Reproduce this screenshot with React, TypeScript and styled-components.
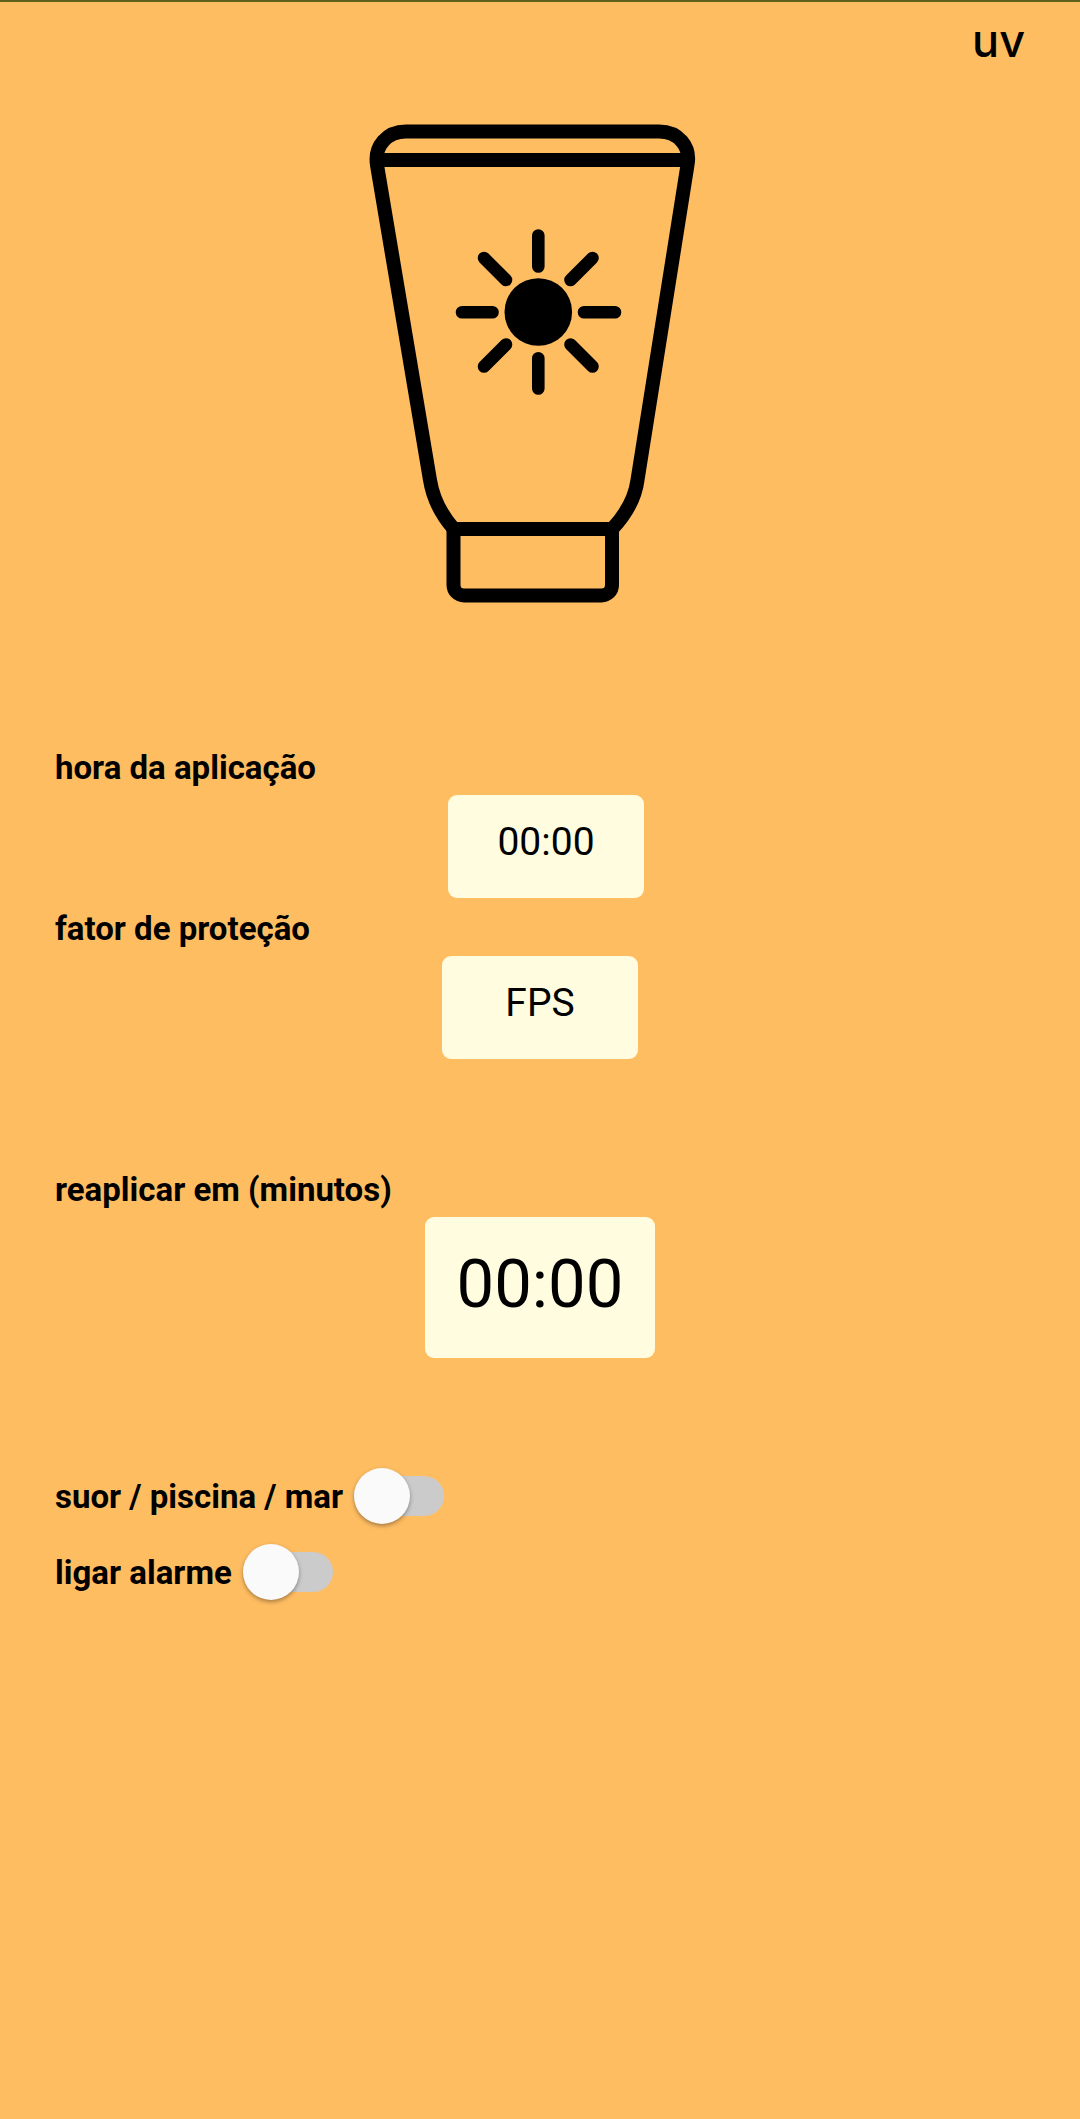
import React, { useState } from "react";
import styled, { createGlobalStyle } from "styled-components";

const GlobalStyle = createGlobalStyle`
  *, *::before { box-sizing: border-box; }
  body {
    margin: 0;
    background: #ffbd62;
    color: #000;
    font-family: Roboto, "Liberation Sans", sans-serif;
  }
`;

const Page = styled.div`
  min-height: 100vh;
  border-top: 2px solid #5f601b;
  padding: 10px 55px 110px;
  display: flex;
  flex-direction: column;
`;

const Header = styled.header`
  display: flex;
  justify-content: flex-end;
`;

const Title = styled.h1`
  margin: 0;
  font-family: Inter, Roboto, sans-serif;
  font-size: 45px;
  line-height: 58px;
  font-weight: 500;
`;

const Hero = styled.div`
  display: flex;
  justify-content: center;
  padding: 54px 0 143px;
`;

const Form = styled.form`
  display: flex;
  flex-direction: column;
  gap: 110px;
`;

const Group = styled.div<{ $gap: number }>`
  display: flex;
  flex-direction: column;
  gap: ${(p) => p.$gap}px;
`;

const Field = styled.div`
  display: flex;
  flex-direction: column;
  gap: 7px;
`;

const Label = styled.label`
  padding-top: 1px;
  font-size: 33px;
  line-height: 40px;
  font-weight: 700;
`;

const Control = styled.div<{ $indent?: number }>`
  display: flex;
  justify-content: center;
  padding-left: ${(p) => p.$indent ?? 0}px;
`;

const TextBox = styled.input`
  width: 196px;
  height: 103px;
  border: 0;
  border-radius: 9px;
  padding: 0 8px 10px;
  background: #fffcdf;
  color: #000;
  font: 400 39px Roboto, "Liberation Sans", sans-serif;
  text-align: center;

  &::placeholder {
    color: #000;
    opacity: 1;
  }
`;

const Result = styled.output`
  width: 230px;
  height: 141px;
  border-radius: 9px;
  padding-bottom: 8px;
  display: flex;
  align-items: center;
  justify-content: center;
  background: #fffcdf;
  font-size: 67px;
  line-height: 80px;
`;

const SwitchRow = styled.div`
  display: flex;
  align-items: center;
  gap: 11px;
  height: 56px;
`;

const Switch = styled.input`
  appearance: none;
  display: flex;
  align-items: center;
  width: 90px;
  height: 40px;
  margin: 0;
  border-radius: 20px;
  background: #cbcbcb;
  cursor: pointer;

  &::before {
    content: "";
    flex: none;
    width: 56px;
    height: 56px;
    border-radius: 50%;
    background: #fafafa;
    box-shadow: 0 2px 4px rgba(0, 0, 0, 0.35);
  }

  &:checked {
    justify-content: flex-end;
    background: #8fc7bf;
  }
`;

function SunscreenTube() {
  return (
    <svg
      width="344"
      height="480"
      viewBox="368 124 344 480"
      fill="none"
      stroke="#000"
      strokeWidth="14"
      role="img"
      aria-label="protetor solar"
    >
      <path d="M453 528C441 514 433 499 430 480L377 165C374 146 387 131.500 406 131.500H659C678 131.500 691 146 687.500 165L637.500 480C635 499 626 514 613 528" />
      <path d="M377 160H687" />
      <path d="M453.500 529H612V585A10.500 10.500 0 0 1 601.500 595.500H464A10.500 10.500 0 0 1 453.500 585Z" />
      <circle cx="538.300" cy="312" r="33.800" fill="#000" stroke="none" />
      <g strokeWidth="12.600" strokeLinecap="round">
        <path d="M538.300 235.500V266.500M538.300 358.300V388.500M462 312.300H492.500M584 312.300H615" />
        <path d="M484 258L506 280M592.500 258L570.500 280M484 366.500L506 344.500M592.500 366.500L570.500 344.500" />
      </g>
    </svg>
  );
}

export default function App() {
  const [time, setTime] = useState("00:00");
  const [factor, setFactor] = useState("");

  return (
    <>
      <GlobalStyle />
      <Page>
        <Header>
          <Title>uv</Title>
        </Header>
        <Hero>
          <SunscreenTube />
        </Hero>
        <Form>
          <Group $gap={10}>
            <Field>
              <Label htmlFor="time">hora da aplicação</Label>
              <Control $indent={12}>
                <TextBox id="time" value={time} onChange={(e) => setTime(e.target.value)} />
              </Control>
            </Field>
            <Field>
              <Label htmlFor="factor">fator de proteção</Label>
              <Control>
                <TextBox
                  id="factor"
                  placeholder="FPS"
                  value={factor}
                  onChange={(e) => setFactor(e.target.value)}
                />
              </Control>
            </Field>
          </Group>
          <Field>
            <Label htmlFor="reapply">reaplicar em (minutos)</Label>
            <Control>
              <Result id="reapply">00:00</Result>
            </Control>
          </Field>
          <Group $gap={20}>
            <SwitchRow>
              <Label htmlFor="water">suor / piscina / mar</Label>
              <Switch id="water" type="checkbox" />
            </SwitchRow>
            <SwitchRow>
              <Label htmlFor="alarm">ligar alarme</Label>
              <Switch id="alarm" type="checkbox" />
            </SwitchRow>
          </Group>
        </Form>
      </Page>
    </>
  );
}
